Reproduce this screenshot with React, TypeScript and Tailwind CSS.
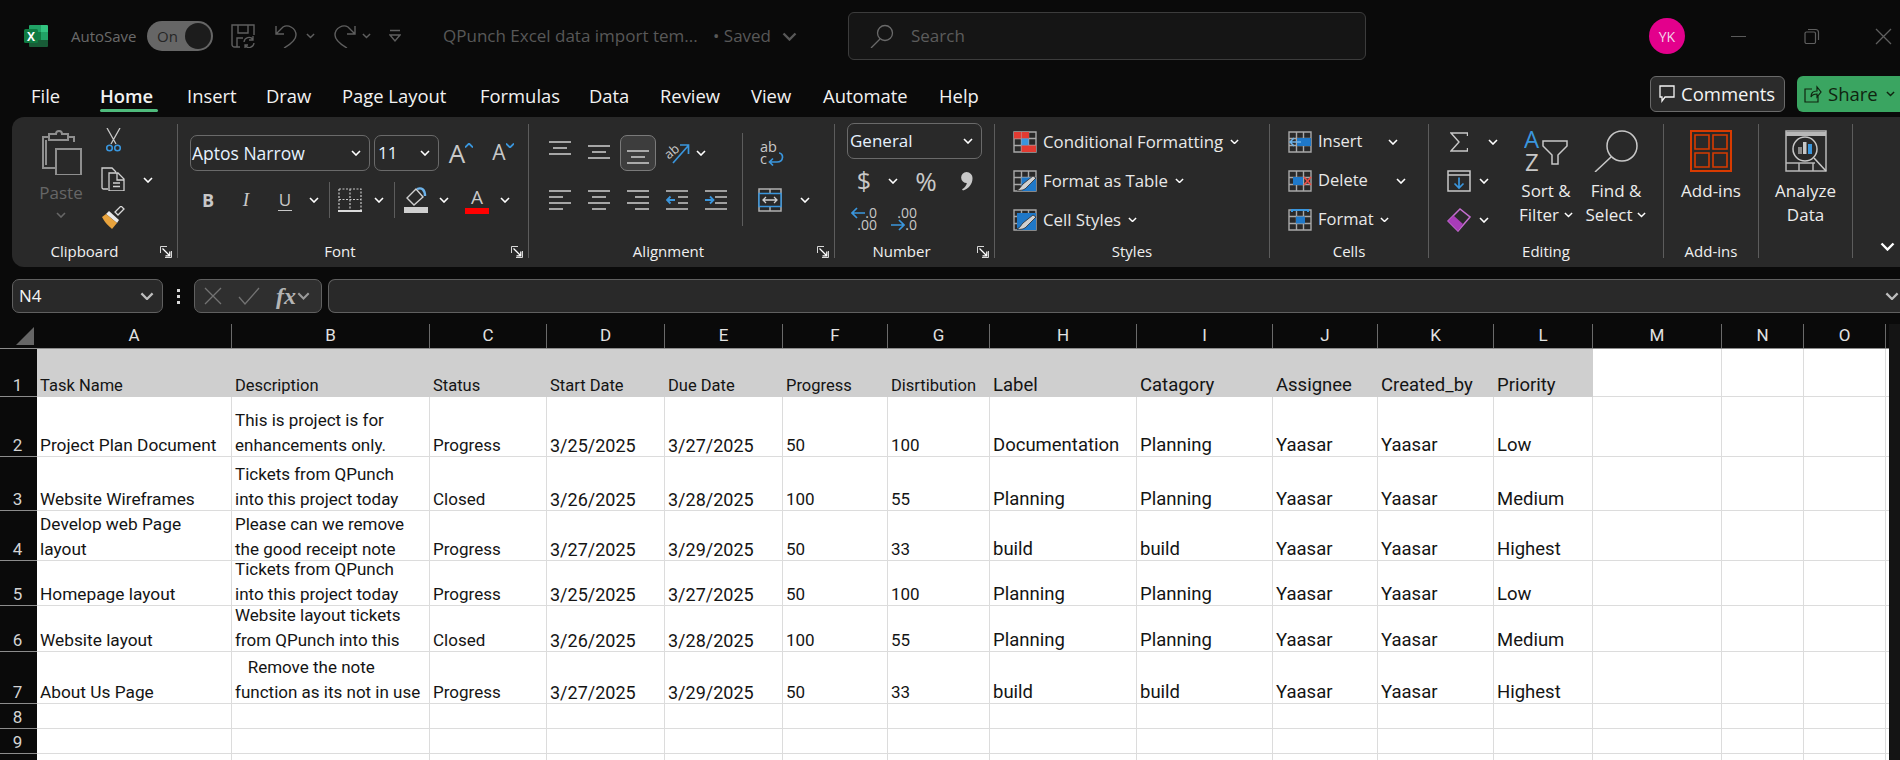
import React from 'react'
import { clsx } from 'clsx'

const G = '#c6c6c6'
const B = '#3a96dd'

function Chev({ className, color = '#ffffff', w = 10 }: { className?: string; color?: string; w?: number }) {
  return (
    <svg width={w} height={w * 0.6} viewBox="0 0 10 6" className={clsx('shrink-0', className)}>
      <path d="M1 1l4 4 4-4" fill="none" stroke={color} strokeWidth="1.6" />
    </svg>
  )
}

function Slot({ className, children }: { className: string; children?: React.ReactNode }) {
  return <div className={clsx('flex shrink-0 items-center justify-center', className)}>{children}</div>
}

function Launcher() {
  return (
    <svg width="12" height="12" viewBox="0 0 12 12" className="absolute right-[5px] bottom-0">
      <path d="M11.5 5V11.5H5M.5 7V.5H7" fill="none" stroke="#d8d8d8" strokeWidth="1" />
      <path d="M2.5 2.5L9.5 9.5M9.8 5.5V9.8H5.5" fill="none" stroke="#ffffff" strokeWidth="1.3" />
    </svg>
  )
}

function Group({ className, label, labelClass, launcher, children }: { className: string; label?: string; labelClass?: string; launcher?: boolean; children: React.ReactNode }) {
  return (
    <div className={clsx('relative flex shrink-0 flex-col border-r border-[#5c5c5c]', className)}>
      <div className="min-h-0 flex-1">{children}</div>
      <div className={clsx('mb-[-5px] flex h-[24px] shrink-0 items-center justify-center text-[15px] text-[#f0f0f0]', labelClass)}>{label}</div>
      {launcher && <Launcher />}
    </div>
  )
}

function Lines({ ys, ws, align }: { ys: number[]; ws: number[]; align: 'l' | 'c' | 'r' }) {
  return (
    <svg width="22" height="36" viewBox="0 0 22 36">
      {ys.map((y, i) => {
        const x = align === 'l' ? 0 : align === 'r' ? 22 - ws[i] : (22 - ws[i]) / 2
        return <line key={y} x1={x} x2={x + ws[i]} y1={y} y2={y} stroke={G} strokeWidth="1.6" />
      })}
    </svg>
  )
}

function Indent({ flip }: { flip?: boolean }) {
  return (
    <svg width="22" height="36" viewBox="0 0 22 36">
      <path d={flip ? 'M0 9H22M10 15H22M10 21H22M0 27H22' : 'M0 9H22M12 15H22M12 21H22M0 27H22'} stroke={G} strokeWidth="1.6" />
      <path d={flip ? 'M0 18H8M5 14.5L8.5 18L5 21.5' : 'M9 18H1M4.5 14.5L1 18L4.5 21.5'} fill="none" stroke={B} strokeWidth="1.8" />
    </svg>
  )
}

function TableIcon({ children }: { children?: React.ReactNode }) {
  return (
    <svg width="24" height="22" viewBox="0 0 24 22" className="shrink-0">
      <path d="M1 1H23V21H1ZM1 7.5H23M1 14.5H23M8.5 1V21M15.5 1V21" fill="none" stroke="#a8a8a8" strokeWidth="1.4" />
      {children}
    </svg>
  )
}

function Brush() {
  return <path d="M23 8L14 17C12 20 7 21 4 20C7 19 8 16 10 14L20 6Z" fill="#d0d0d0" stroke="#292929" strokeWidth=".8" />
}

function ExcelLogo() {
  return (
    <svg width="24" height="24" viewBox="0 0 24 24">
      <path d="M5 2a1 1 0 0 1 1-1h11v7H5Z" fill="#21a366" />
      <path d="M17 1h6a1 1 0 0 1 1 1v6h-7Z" fill="#33c481" />
      <path d="M5 8h12v8H5Z" fill="#107c41" />
      <path d="M17 8h7v8h-7Z" fill="#21a366" />
      <path d="M5 16h19v6a1 1 0 0 1-1 1H6a1 1 0 0 1-1-1Z" fill="#185c37" />
      <rect x="0" y="5" width="14" height="14" rx="1.5" fill="#0f7b41" />
      <text x="7" y="16.5" textAnchor="middle" fontSize="12" fontWeight="700" fill="#ffffff" fontFamily="Open Sans">X</text>
    </svg>
  )
}

function TitleBar() {
  const dim = '#5f5f5f'
  return (
    <div className="flex h-[72px] items-center">
      <div className="ml-[24px] h-[24px] w-[24px]"><ExcelLogo /></div>
      <span className="ml-[23px] w-[76px] text-[15px] text-[#6a6a6a]">AutoSave</span>
      <div className="flex h-[30px] w-[66px] items-center justify-between rounded-full bg-[#666666] pr-[2px] pl-[10px]">
        <span className="text-[15px] text-[#262626]">On</span>
        <span className="h-[26px] w-[26px] rounded-full bg-[#1c1c1c]" />
      </div>
      <svg width="24" height="24" viewBox="0 0 24 24" className="ml-[18px]">
        <path d="M9 23H3.5A2.5 2.5 0 0 1 1 20.5V1H23V11M7 1V9H17V1M6 23V14H12" fill="none" stroke={dim} strokeWidth="1.4" />
        <path d="M13 18a5 5 0 0 1 9-2.500M23 19a5 5 0 0 1-9 2.500M22 12v4h-4M14 24v-3h3" fill="none" stroke={dim} strokeWidth="1.3" />
      </svg>
      <svg width="24" height="24" viewBox="0 0 24 24" className="ml-[19px]">
        <path d="M2 2V10H10M2 10L9 3C14 0 22 4 22 11C22 15 17 20 10 24" fill="none" stroke={dim} strokeWidth="1.4" />
      </svg>
      <Chev className="ml-[8px]" color={dim} w={9} />
      <svg width="24" height="24" viewBox="0 0 24 24" className="ml-[18px]">
        <path d="M22 2V10H14M22 10L15 3C10 0 2 4 2 11C2 15 7 20 14 24" fill="none" stroke={dim} strokeWidth="1.4" />
      </svg>
      <Chev className="ml-[5px]" color={dim} w={9} />
      <svg width="12" height="14" viewBox="0 0 12 14" className="ml-[18px]">
        <path d="M1 1.500H11M1 6L6 12L11 6Z" fill="none" stroke={dim} strokeWidth="1.4" />
      </svg>
      <span className="ml-[42px] w-[270px] text-[17px] whitespace-nowrap text-[#585858]">QPunch Excel data import tem...</span>
      <span className="w-[69px] text-[17px] whitespace-nowrap text-[#585858]">• Saved</span>
      <Chev color="#585858" w={15} />
      <div className="ml-[51px] flex h-[48px] w-[518px] items-center rounded-[6px] border border-[#3c3c3c] bg-[#151515] pl-[21px]">
        <svg width="24" height="24" viewBox="0 0 24 24">
          <circle cx="15" cy="9" r="7.500" fill="none" stroke="#6a6a6a" strokeWidth="1.3" />
          <path d="M10 15L1 24" stroke="#6a6a6a" strokeWidth="1.3" />
        </svg>
        <span className="ml-[17px] text-[17px] text-[#5c5c5c]">Search</span>
      </div>
      <div className="ml-[283px] flex h-[36px] w-[36px] items-center justify-center rounded-full bg-[#e3008c] text-[14px] text-[#f4d6e8]">YK</div>
      <div className="ml-[46px] h-[1px] w-[15px] bg-[#5a5a5a]" />
      <svg width="16" height="16" viewBox="0 0 16 16" className="ml-[58px]">
        <path d="M1 5.500A1.500 1.500 0 0 1 2.500 4H10A1.500 1.500 0 0 1 11.500 5.500V14A1.500 1.500 0 0 1 10 15.500H2.500A1.500 1.500 0 0 1 1 14ZM4 1.500H11.500A3 3 0 0 1 14.500 4.500V12" fill="none" stroke="#5f5f5f" strokeWidth="1.200" />
      </svg>
      <svg width="17" height="17" viewBox="0 0 17 17" className="ml-[55px]">
        <path d="M1 1L16 16M16 1L1 16" stroke="#5f5f5f" strokeWidth="1.300" />
      </svg>
    </div>
  )
}

const menus = [
  { name: 'File', w: 'w-[69px]' },
  { name: 'Home', w: 'w-[87px]', active: true },
  { name: 'Insert', w: 'w-[79px]' },
  { name: 'Draw', w: 'w-[76px]' },
  { name: 'Page Layout', w: 'w-[138px]' },
  { name: 'Formulas', w: 'w-[109px]' },
  { name: 'Data', w: 'w-[71px]' },
  { name: 'Review', w: 'w-[91px]' },
  { name: 'View', w: 'w-[72px]' },
  { name: 'Automate', w: 'w-[116px]' },
  { name: 'Help', w: 'w-[60px]' },
]

function MenuBar() {
  return (
    <div className="flex h-[45px] items-start pl-[31px]">
      {menus.map((m) => (
        <div key={m.name} className={clsx('relative h-[37px] shrink-0 pt-[11px] text-[18.400px] leading-[26px] text-[#f2f2f2]', m.w, m.active && 'font-semibold')}>
          {m.name}
          {m.active && <span className="absolute top-[37px] left-0 h-[3px] w-[58px] rounded-full bg-[#4fbb7c]" />}
        </div>
      ))}
      <div className="mt-[4px] ml-[651px] flex h-[36px] w-[135px] shrink-0 items-center gap-[6px] rounded-[6px] border border-[#6a6a6a] bg-[#2b2b2b] pl-[8px] text-[18.500px] text-[#f4f4f4]">
        <svg width="16" height="18" viewBox="0 0 16 18" className="shrink-0">
          <path d="M1 1H15V12H6L3 16V12H1Z" fill="none" stroke="#f4f4f4" strokeWidth="1.300" />
        </svg>
        Comments
      </div>
      <div className="mt-[4px] ml-[12px] flex h-[36px] w-[103px] shrink-0 items-center rounded-l-[6px] bg-[#3aa561] pl-[7px] text-[18.500px] text-[#10240f]">
        <svg width="18" height="18" viewBox="0 0 18 18" className="mr-[6px] shrink-0">
          <path d="M8 4H1V17H14V10M7 12C7 8 9 6 13 6V2L17 7L13 12V9C10 9 8 10 7 12Z" fill="none" stroke="#10240f" strokeWidth="1.200" />
        </svg>
        Share
        <Chev className="ml-[8px]" color="#10240f" w={9} />
      </div>
    </div>
  )
}

function Clipboard() {
  return (
    <Group className="w-[166px]" label="Clipboard" labelClass="pr-[20px]" launcher>
      <div className="flex">
        <div className="ml-[29px] flex w-[40px] flex-col items-center pt-[6px]">
          <svg width="41" height="45" viewBox="0 0 41 45" className="shrink-0">
            <path d="M8 7H2V38H14M26 7H33V12M8 4H15C15 0 21 0 21 4H27V10H8Z" fill="none" stroke="#8f8f8f" strokeWidth="2" />
            <path d="M5 10V35" stroke="#8f8f8f" strokeWidth="2" />
            <path d="M15 19H40V45H15Z" fill="#292929" stroke="#8f8f8f" strokeWidth="2" />
          </svg>
          <span className="mt-[8px] text-[17px] leading-[20px] text-[#666666]">Paste</span>
          <Chev className="mt-[9px]" color="#666666" w={10} />
        </div>
        <div className="ml-[19px] flex w-[26px] flex-col items-center pt-[4px]">
          <svg width="15" height="24" viewBox="0 0 15 24">
            <path d="M1 0L10 16M14 0L5 16" stroke="#c8c8c8" strokeWidth="1.300" />
            <circle cx="3.500" cy="20" r="2.800" fill="none" stroke={B} strokeWidth="1.600" />
            <circle cx="11.500" cy="20" r="2.800" fill="none" stroke={B} strokeWidth="1.600" />
          </svg>
          <svg width="24" height="24" viewBox="0 0 24 24" className="mt-[15px]">
            <path d="M7 22H2.500A1.500 1.500 0 0 1 1 20.500V1H11L15 5M8 6H17L23 12V24H8ZM16 6V13H23M12 16H19M12 19.500H19" fill="none" stroke="#d0d0d0" strokeWidth="1.300" />
          </svg>
          <svg width="24" height="23" viewBox="0 0 24 23" className="mt-[15px]">
            <path d="M14 6L17 9L23 3L20 0Z" fill="none" stroke="#d8d8d8" strokeWidth="1.300" />
            <path d="M8 5L18 14L16 17L5 8Z" fill="#e8e8e8" />
            <path d="M1 11L5 8L16 17L11 23C8 20 4 17 1 11Z" fill="#e8a33d" />
          </svg>
        </div>
        <Slot className="ml-[15px] h-[112px] w-[14px]"><Chev /></Slot>
      </div>
    </Group>
  )
}

function FontGroup() {
  return (
    <Group className="w-[351px]" label="Font" labelClass="pr-[26px]" launcher>
      <div className="mt-[11px] flex h-[36px] pl-[12px]">
        <div className="flex w-[180px] items-center justify-between rounded-[7px] border border-[#6a6a6a] pr-[8px] pl-[1px] text-[17.500px] text-[#e6f2ff]">
          Aptos Narrow <Chev />
        </div>
        <div className="ml-[4px] flex w-[65px] items-center justify-between rounded-[7px] border border-[#6a6a6a] pr-[8px] pl-[3px] text-[17px] text-[#e6f2ff]">
          11 <Chev />
        </div>
        <Slot className="ml-[10px] w-[24px]">
          <span className="font-['Open_Sans',sans-serif] text-[26px] text-[#c8c8c8]">A</span>
          <svg width="8" height="5" viewBox="0 0 8 5" className="mb-[16px] shrink-0"><path d="M0 4.500L4 .5L8 4.500" fill="none" stroke={B} strokeWidth="1.800" /></svg>
        </Slot>
        <Slot className="ml-[19px] w-[22px]">
          <span className="text-[21px] text-[#c8c8c8]">A</span>
          <svg width="8" height="5" viewBox="0 0 8 5" className="mb-[16px] shrink-0"><path d="M0 .5L4 4.500L8 .5" fill="none" stroke={B} strokeWidth="1.800" /></svg>
        </Slot>
      </div>
      <div className="mt-[11px] flex h-[36px] pl-[12px] text-[#c8c8c8]">
        <Slot className="w-[36px] text-[18px] font-bold">B</Slot>
        <Slot className="w-[40px] font-['Liberation_Serif',serif] text-[19px] italic">I</Slot>
        <Slot className="w-[38px]"><span className="border-b-[1.500px] border-[#c8c8c8] px-[1px] text-[17px] leading-[20px]">U</span></Slot>
        <Slot className="w-[20px]"><Chev /></Slot>
        <div className="ml-[5px] h-full w-[1px] bg-[#5c5c5c]" />
        <Slot className="w-[40px]">
          <svg width="24" height="24" viewBox="0 0 24 24">
            <path d="M1 1H23V22M1 1V22M12 1V22M1 11.500H23" fill="none" stroke="#c8c8c8" strokeWidth="1.200" strokeDasharray="2 1.500" />
            <path d="M0 23H24" stroke="#f0f0f0" strokeWidth="1.800" />
          </svg>
        </Slot>
        <Slot className="w-[18px]"><Chev /></Slot>
        <div className="ml-[6px] h-full w-[1px] bg-[#5c5c5c]" />
        <Slot className="w-[41px]">
          <svg width="24" height="26" viewBox="0 0 24 26">
            <path d="M12 2L3 11L10 18L19 10Z" fill="none" stroke="#d0d0d0" strokeWidth="1.400" />
            <path d="M13 2C18 0 21 3 21 9" fill="none" stroke="#6db3ea" strokeWidth="2.400" />
            <rect x="0" y="20" width="24" height="6" fill="#cfcfcf" />
          </svg>
        </Slot>
        <Slot className="w-[16px]"><Chev /></Slot>
        <Slot className="w-[50px]">
          <div className="flex w-[24px] flex-col items-center">
            <span className="text-[19px] leading-[21px] text-[#c8c8c8]">A</span>
            <span className="h-[6px] w-[24px] bg-[#ff0000]" />
          </div>
        </Slot>
        <Slot className="w-[6px]"><Chev /></Slot>
      </div>
    </Group>
  )
}

function Alignment() {
  return (
    <Group className="w-[306px]" label="Alignment" labelClass="pr-[26px]" launcher>
      <div className="flex pl-[11px]">
        <div className="mt-[11px] w-[195px] shrink-0">
          <div className="flex h-[36px]">
            <Slot className="w-[39px]"><Lines ys={[7, 13, 19]} ws={[22, 14, 22]} align="c" /></Slot>
            <Slot className="w-[39px]"><Lines ys={[11, 17, 23]} ws={[22, 14, 22]} align="c" /></Slot>
            <Slot className="w-[39px]">
              <div className="flex h-[36px] w-[36px] items-center justify-center rounded-[7px] border border-[#7a7a7a] bg-[#3d3d3d]">
                <Lines ys={[16, 22, 28]} ws={[22, 14, 22]} align="c" />
              </div>
            </Slot>
            <Slot className="w-[39px]">
              <svg width="24" height="24" viewBox="0 0 24 24" className="overflow-visible">
                <text x="-1" y="14" transform="rotate(-40 8 10)" fontSize="13" fill="#c8c8c8" fontFamily="Open Sans">ab</text>
                <path d="M8 22L23 5M15 4H23.500V13" fill="none" stroke={B} strokeWidth="1.700" />
              </svg>
            </Slot>
            <Slot className="w-[10px]"><Chev /></Slot>
          </div>
          <div className="mt-[11px] flex h-[36px]">
            <Slot className="w-[39px]"><Lines ys={[9, 15, 21, 27]} ws={[22, 14, 22, 14]} align="l" /></Slot>
            <Slot className="w-[39px]"><Lines ys={[9, 15, 21, 27]} ws={[22, 14, 22, 14]} align="c" /></Slot>
            <Slot className="w-[39px]"><Lines ys={[9, 15, 21, 27]} ws={[22, 14, 22, 14]} align="r" /></Slot>
            <Slot className="w-[39px]"><Indent /></Slot>
            <Slot className="w-[39px]"><Indent flip /></Slot>
          </div>
        </div>
        <div className="mt-[9px] ml-[7px] h-[93px] w-[1px] bg-[#5c5c5c]" />
        <div className="mt-[11px] w-[90px]">
          <Slot className="h-[36px] w-[58px]">
            <svg width="24" height="26" viewBox="0 0 24 26" className="overflow-visible">
              <text x="0" y="12" fontSize="14.500" fill="#c8c8c8" fontFamily="Open Sans">ab</text>
              <text x="0" y="24" fontSize="14.500" fill="#c8c8c8" fontFamily="Open Sans">c</text>
              <path d="M19 13C24 13 24 22 17 22H10M13 18.500L9.500 22L13 25.500" fill="none" stroke={B} strokeWidth="1.700" />
            </svg>
          </Slot>
          <div className="mt-[11px] flex h-[36px]">
            <Slot className="w-[54px]">
              <svg width="24" height="24" viewBox="0 0 24 24">
                <path d="M1 1H23V23H1ZM12 1V5M12 19V23" fill="none" stroke="#b0b0b0" strokeWidth="1.500" />
                <rect x="1" y="5.500" width="22" height="13" fill="#292929" stroke={B} strokeWidth="1.500" />
                <path d="M5 12H19M8 9L5 12L8 15M16 9L19 12L16 15" fill="none" stroke="#d0d0d0" strokeWidth="1.300" />
              </svg>
            </Slot>
            <Slot className="ml-[3px] w-[10px]"><Chev /></Slot>
          </div>
        </div>
      </div>
    </Group>
  )
}

function NumberGroup() {
  return (
    <Group className="w-[160px]" label="Number" labelClass="pr-[26px]" launcher>
      <div className="-mt-[1px] ml-[12px] flex h-[36px] w-[135px] items-center justify-between rounded-[7px] border border-[#6a6a6a] pr-[8px] pl-[2px] text-[17px] text-[#e6f2ff]">
        General <Chev />
      </div>
      <div className="mt-[4px] ml-[12px] flex h-[36px] text-[#c8c8c8]">
        <Slot className="w-[34px] text-[25px]">$</Slot>
        <Slot className="w-[24px]"><Chev /></Slot>
        <Slot className="w-[42px] text-[26px]">%</Slot>
        <Slot className="w-[38px]">
          <svg width="13" height="19" viewBox="0 0 13 19">
            <path d="M6.500 0a6 6 0 0 1 6 6.500c0 5.500-4 10.500-9.500 12l-1-1.200c3-1.800 4.500-4 4.800-6.300a5.500 5.500 0 0 1-.3-11Z" fill="#c8c8c8" />
          </svg>
        </Slot>
      </div>
      <div className="mt-[2px] ml-[10px] flex h-[36px] text-[14px] leading-[12px] text-[#c8c8c8]">
        <Slot className="w-[40px]">
          <div className="w-[24px] text-right">
            <div className="flex items-center justify-end">
              <svg width="14" height="12" viewBox="0 0 14 12" className="shrink-0"><path d="M14 6H1M6 1L1 6L6 11" fill="none" stroke={B} strokeWidth="1.700" /></svg>
              <span>.0</span>
            </div>
            <div>.00</div>
          </div>
        </Slot>
        <Slot className="w-[40px]">
          <div className="w-[24px] text-right">
            <div>.00</div>
            <div className="flex items-center justify-end">
              <svg width="14" height="12" viewBox="0 0 14 12" className="shrink-0"><path d="M0 6H13M8 1L13 6L8 11" fill="none" stroke={B} strokeWidth="1.700" /></svg>
              <span>.0</span>
            </div>
          </div>
        </Slot>
      </div>
    </Group>
  )
}

function Styles() {
  const rows: [string, string, React.ReactNode][] = [
    ['Conditional Formatting', 'cf', <><rect x="9" y="1" width="7" height="6.500" fill="#e23b32" /><rect x="1" y="1" width="7.500" height="6.500" fill="#e23b32" /><rect x="8.500" y="7.500" width="7" height="7" fill="#3a96dd" /><rect x="8.500" y="14.500" width="14.500" height="6.500" fill="#e23b32" /></>],
    ['Format as Table', 'ft', <><rect x="8.500" y="7.500" width="14.500" height="13.500" fill="#1f78c8" /><Brush /></>],
    ['Cell Styles', 'cs', <><rect x="4" y="4" width="19" height="17" fill="#1f78c8" /><Brush /></>],
  ]
  return (
    <Group className="w-[275px]" label="Styles">
      <div className="-mt-[2px] pl-[18px]">
        {rows.map(([t, k, icon]) => (
          <div key={k} className="flex h-[39px] items-center gap-[6px] text-[16.800px] text-[#e8e8e8]">
            <TableIcon>{icon}</TableIcon>
            {t}
            <Chev className="ml-[1px]" w={9} />
          </div>
        ))}
      </div>
    </Group>
  )
}

function Cells() {
  return (
    <Group className="w-[159px]" label="Cells">
      <div className="-mt-[2px] pl-[18px] text-[16.500px] text-[#e8e8e8]">
        <div className="flex h-[39px] items-center gap-[6px]">
          <TableIcon>
            <rect x="9" y="7" width="14" height="8" fill="#1f78c8" />
            <path d="M13 11H2M6 7L2 11L6 15" fill="none" stroke="#6db3ea" strokeWidth="1.500" />
          </TableIcon>
          <span className="w-[64px]">Insert</span>
          <Chev />
        </div>
        <div className="flex h-[39px] items-center gap-[6px]">
          <TableIcon>
            <rect x="5" y="7" width="10" height="8" fill="#1f78c8" />
            <path d="M16 7L23 15M23 7L16 15" stroke="#e74c45" strokeWidth="1.800" />
          </TableIcon>
          <span className="w-[72px]">Delete</span>
          <Chev />
        </div>
        <div className="flex h-[39px] items-center gap-[6px]">
          <TableIcon>
            <rect x="8" y="7.500" width="9" height="7" fill="#1f78c8" />
            <path d="M4 1H20M4 -1V3M20 -1V3" stroke="#3a96dd" strokeWidth="2" />
          </TableIcon>
          Format
          <Chev w={9} />
        </div>
      </div>
    </Group>
  )
}

function Editing() {
  return (
    <Group className="w-[235px]" label="Editing">
      <div className="flex">
        <div className="-mt-[2px] ml-[18px] w-[59px] shrink-0">
          <div className="flex h-[39px] items-center">
            <Slot className="w-[24px]">
              <svg width="18" height="20" viewBox="0 0 18 20"><path d="M17.500 4V1H1L9 10L1 19H17.500V16" fill="none" stroke="#c8c8c8" strokeWidth="1.400" /></svg>
            </Slot>
            <Chev className="ml-[17px]" />
          </div>
          <div className="flex h-[39px] items-center">
            <svg width="24" height="22" viewBox="0 0 24 22" className="shrink-0">
              <path d="M1 1H23V21H1ZM1 5H23" fill="none" stroke="#c8c8c8" strokeWidth="1.500" />
              <path d="M12 7.500V18M7.500 13.500L12 18L16.500 13.500" fill="none" stroke={B} strokeWidth="1.700" />
            </svg>
            <Chev className="ml-[8px]" />
          </div>
          <div className="flex h-[39px] items-center">
            <svg width="24" height="24" viewBox="0 0 24 24" className="shrink-0">
              <path d="M1 13L13 1L23 9L11 23Z" fill="none" stroke="#c56fd0" strokeWidth="1.500" />
              <path d="M1 13L6.500 7.500L16 16L11 23Z" fill="#a83cb8" />
            </svg>
            <Chev className="ml-[8px]" />
          </div>
        </div>
        <div className="mt-[6px] flex w-[80px] shrink-0 flex-col items-center text-[17px] leading-[24px] text-[#ececec]">
          <svg width="44" height="42" viewBox="0 0 44 42" className="mb-[7px] shrink-0">
            <text x="0" y="18" fontSize="24" fill={B} fontFamily="Open Sans">A</text>
            <text x="1" y="41" fontSize="24" fill="#c8c8c8" fontFamily="Open Sans">Z</text>
            <path d="M19 11H43V16L34 25V34H28V25L19 16Z" fill="none" stroke="#c8c8c8" strokeWidth="1.500" />
          </svg>
          <span className="whitespace-nowrap">Sort &amp;</span>
          <span className="flex items-center gap-[5px] whitespace-nowrap">Filter <Chev w={9} /></span>
        </div>
        <div className="mt-[6px] flex w-[60px] shrink-0 flex-col items-center text-[17px] leading-[24px] text-[#ececec]">
          <svg width="44" height="42" viewBox="0 0 44 42" className="mb-[7px] shrink-0">
            <circle cx="28" cy="16" r="15" fill="none" stroke="#c8c8c8" strokeWidth="1.500" />
            <path d="M17 27L1 42" stroke="#c8c8c8" strokeWidth="1.500" />
          </svg>
          <span className="whitespace-nowrap">Find &amp;</span>
          <span className="flex items-center gap-[5px] whitespace-nowrap">Select <Chev w={9} /></span>
        </div>
      </div>
    </Group>
  )
}

function AddIns() {
  return (
    <Group className="w-[95px]" label="Add-ins">
      <div className="mt-[6px] flex flex-col items-center text-[17px] leading-[24px] text-[#ececec]">
        <svg width="42" height="42" viewBox="0 0 42 42" className="mb-[7px] shrink-0">
          <path d="M1 1H41V41H1Z" fill="none" stroke="#d83b01" strokeWidth="2" />
          <path d="M5 5H19V19H5ZM23 5H37V19H23ZM5 23H19V37H5ZM23 23H37V37H23Z" fill="none" stroke="#d83b01" strokeWidth="1.600" />
        </svg>
        Add-ins
      </div>
    </Group>
  )
}

function Analyze() {
  return (
    <Group className="w-[94px]">
      <div className="mt-[6px] flex flex-col items-center text-[17px] leading-[24px] text-[#ececec]">
        <svg width="42" height="42" viewBox="0 0 42 42" className="mb-[7px] shrink-0">
          <path d="M1 1H41V41H1ZM1 33H30M14 33V41M28 33V41" fill="none" stroke="#b8b8b8" strokeWidth="1.500" />
          <path d="M1 2H41V6H1Z" fill="#b8b8b8" />
          <circle cx="20" cy="19" r="12" fill="#292929" stroke="#c8c8c8" strokeWidth="1.500" />
          <path d="M29 28L41 41" stroke="#c8c8c8" strokeWidth="1.500" />
          <rect x="13" y="17" width="4" height="7" fill="#8a8a8a" />
          <rect x="18" y="12" width="3.500" height="12" fill="#c8c8c8" />
          <rect x="23" y="14" width="4" height="10" fill="#3a96dd" />
        </svg>
        Analyze
        <span>Data</span>
      </div>
    </Group>
  )
}

function Ribbon() {
  return (
    <div className="ml-[12px] flex h-[150px] rounded-l-[12px] bg-[#292929] pt-[7px] pb-[9px]">
      <Clipboard />
      <FontGroup />
      <Alignment />
      <NumberGroup />
      <Styles />
      <Cells />
      <Editing />
      <AddIns />
      <Analyze />
      <div className="flex flex-1 items-end justify-end pr-[5px] pb-[7px]">
        <Chev w={15} />
      </div>
    </div>
  )
}

function FormulaBar() {
  return (
    <div className="flex h-[34px] items-stretch text-[#bdbdbd]">
      <div className="ml-[12px] flex w-[151px] items-center justify-between rounded-[7px] border border-[#606060] bg-[#292929] pr-[8px] pl-[6px] text-[17px] text-[#f4f4f4]">
        N4 <Chev color="#bdbdbd" w={14} />
      </div>
      <div className="flex w-[31px] flex-col items-center justify-center gap-[3px]">
        <span className="h-[3px] w-[3px] bg-[#d8d8d8]" />
        <span className="h-[3px] w-[3px] bg-[#d8d8d8]" />
        <span className="h-[3px] w-[3px] bg-[#d8d8d8]" />
      </div>
      <div className="flex w-[128px] items-center rounded-[7px] border border-[#606060] bg-[#2f2f2f] pl-[9px]">
        <svg width="18" height="18" viewBox="0 0 18 18"><path d="M1 1L17 17M17 1L1 17" stroke="#737373" strokeWidth="1.300" /></svg>
        <svg width="22" height="18" viewBox="0 0 22 18" className="ml-[16px]"><path d="M1 10L7 17L21 1" fill="none" stroke="#737373" strokeWidth="1.300" /></svg>
        <span className="ml-[16px] font-['Liberation_Serif',serif] text-[24px] font-bold text-[#b5b5b5] italic">fx</span>
        <Chev className="ml-[1px]" color="#9a9a9a" w={13} />
      </div>
      <div className="ml-[6px] flex flex-1 items-center justify-end rounded-l-[7px] border border-r-0 border-[#606060] bg-[#292929] pr-[1px]">
        <Chev color="#bdbdbd" w={14} />
      </div>
    </div>
  )
}

const gridCols = 'grid grid-rows-[minmax(0,1fr)] grid-cols-[37px_195px_198px_117px_118px_118px_105px_102px_147px_136px_105px_116px_99px_129px_82px_82px_3px]'

const colLetters = ['A', 'B', 'C', 'D', 'E', 'F', 'G', 'H', 'I', 'J', 'K', 'L', 'M', 'N', 'O']

type Row = { h: string; cells: string[][] }

const y = 'Yaasar'
const data: Row[] = [
  { h: 'h-[60px]', cells: [['Project Plan Document'], ['This is project is for', 'enhancements only.'], ['Progress'], ['3/25/2025'], ['3/27/2025'], ['50'], ['100'], ['Documentation'], ['Planning'], [y], [y], ['Low']] },
  { h: 'h-[54px]', cells: [['Website Wireframes'], ['Tickets from QPunch', 'into this project today'], ['Closed'], ['3/26/2025'], ['3/28/2025'], ['100'], ['55'], ['Planning'], ['Planning'], [y], [y], ['Medium']] },
  { h: 'h-[50px]', cells: [['Develop web Page', 'layout'], ['Please can we remove', 'the good receipt note'], ['Progress'], ['3/27/2025'], ['3/29/2025'], ['50'], ['33'], ['build'], ['build'], [y], [y], ['Highest']] },
  { h: 'h-[45px]', cells: [['Homepage layout'], ['Tickets from QPunch', 'into this project today'], ['Progress'], ['3/25/2025'], ['3/27/2025'], ['50'], ['100'], ['Planning'], ['Planning'], [y], [y], ['Low']] },
  { h: 'h-[46px]', cells: [['Website layout'], ['Website layout tickets', 'from QPunch into this'], ['Closed'], ['3/26/2025'], ['3/28/2025'], ['100'], ['55'], ['Planning'], ['Planning'], [y], [y], ['Medium']] },
  { h: 'h-[52px]', cells: [['About Us Page'], ['\u00a0\u00a0\u00a0Remove the note', 'function as its not in use'], ['Progress'], ['3/27/2025'], ['3/29/2025'], ['50'], ['33'], ['build'], ['build'], [y], [y], ['Highest']] },
]

function sizeFor(col: number) {
  if (col === 0) return 'text-[17.300px]'
  if (col === 3 || col === 4) return 'text-[18px]'
  if (col >= 7) return 'text-[18.500px]'
  return 'text-[17px]'
}

function RowNum({ n }: { n: number }) {
  return (
    <div className="flex items-end justify-center border-b border-[#8c8c8c] bg-[#0a0a0a] pr-[2px] text-[#d4d4d4]">
      <span className="-mb-[2px] leading-[25px]">{n}</span>
    </div>
  )
}

function Cell({ lines, className }: { lines?: string[]; className?: string }) {
  return (
    <div className={clsx('flex items-end border-r border-b border-[#dcdcdc] pl-[3px]', className)}>
      {lines && (
        <div className="-mb-[2px] leading-[25px] whitespace-nowrap">
          {lines.map((l) => (
            <div key={l}>{l}</div>
          ))}
        </div>
      )}
    </div>
  )
}

function Sheet() {
  const headers = ['Task Name', 'Description', 'Status', 'Start Date', 'Due Date', 'Progress', 'Disrtibution', 'Label', 'Catagory', 'Assignee', 'Created_by', 'Priority']
  return (
    <div className="mt-[11px] flex font-['Roboto',sans-serif] text-[17px] text-[#141414]">
      <div className="w-[1889px] shrink-0">
        <div className={clsx(gridCols, 'h-[25px] border-b border-[#8c8c8c] bg-[#0a0a0a] text-[#e2e2e2]')}>
          <div className="flex items-center justify-end pr-[3px]">
            <svg width="18" height="18" viewBox="0 0 18 18"><path d="M18 0V18H0Z" fill="#666666" /></svg>
          </div>
          {colLetters.map((c) => (
            <div key={c} className="flex items-center justify-center border-r border-[#6a6a6a]">{c}</div>
          ))}
          <div />
        </div>
        <div className={clsx(gridCols, 'h-[48px]')}>
          <RowNum n={1} />
          {headers.map((t, i) => (
            <Cell key={t} lines={[t]} className={clsx('border-r-[#cfcfcf] border-b-[#cfcfcf] bg-[#cfcfcf]', i < 7 ? 'text-[16.500px]' : 'text-[18.500px]')} />
          ))}
          <Cell className="bg-white" />
          <Cell className="bg-white" />
          <Cell className="bg-white" />
          <div className="border-b border-[#dcdcdc] bg-white" />
        </div>
        {data.map((r, i) => (
          <div key={i} className={clsx(gridCols, r.h)}>
            <RowNum n={i + 2} />
            {r.cells.map((c, j) => (
              <Cell key={j} lines={c} className={clsx('bg-white', sizeFor(j))} />
            ))}
            <Cell className="bg-white" />
            <Cell className="bg-white" />
            <Cell className="bg-white" />
            <div className="border-b border-[#dcdcdc] bg-white" />
          </div>
        ))}
        {[8, 9, 10].map((n) => (
          <div key={n} className={clsx(gridCols, 'h-[25px]')}>
            <RowNum n={n} />
            {colLetters.map((c) => (
              <Cell key={c} className="bg-white" />
            ))}
            <div className="border-b border-[#dcdcdc] bg-white" />
          </div>
        ))}
      </div>
      <div className="flex-1 bg-[#141414]" />
    </div>
  )
}

export default function App() {
  return (
    <div className="h-[760px] w-[1900px] overflow-hidden bg-[#0a0a0a] font-['Open_Sans',sans-serif]">
      <TitleBar />
      <MenuBar />
      <Ribbon />
      <div className="h-[12px]" />
      <FormulaBar />
      <Sheet />
    </div>
  )
}
